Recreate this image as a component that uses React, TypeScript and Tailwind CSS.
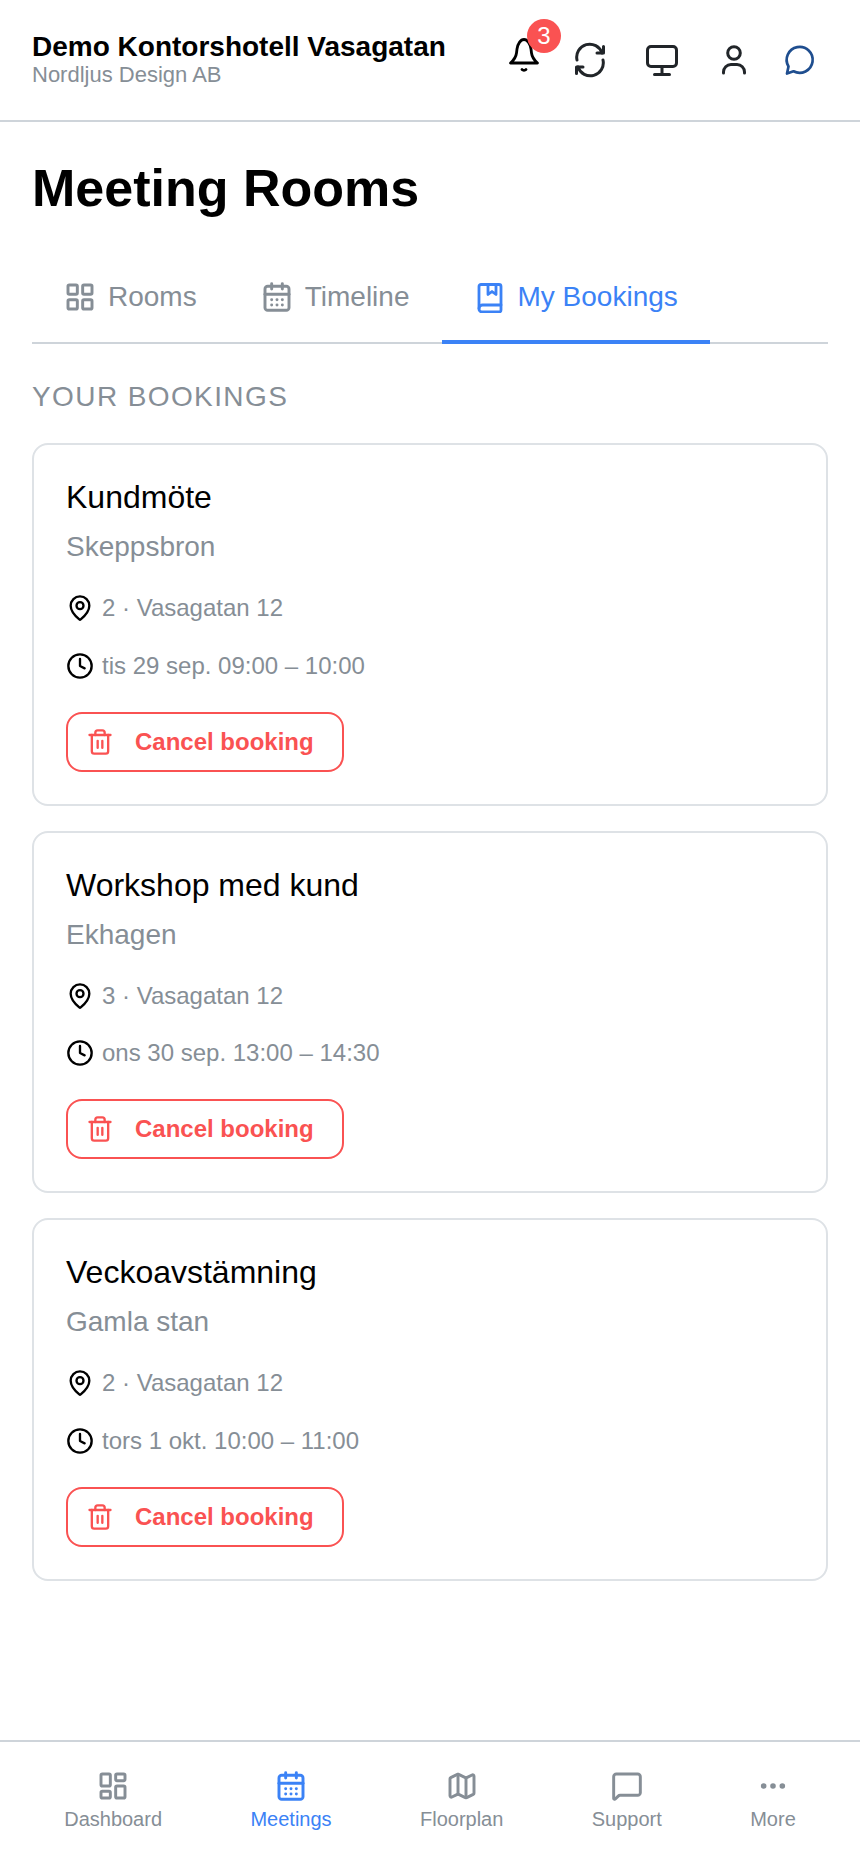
import React from 'react';
import {
  CalendarDays,
  Clock,
  Ellipsis,
  LayoutDashboard,
  LayoutGrid,
  Map,
  MapPin,
  MessageSquare,
  Trash2,
} from 'lucide-react';

const bookings = [
  { title: 'Kundmöte', room: 'Skeppsbron', place: '2 · Vasagatan 12', time: 'tis 29 sep. 09:00 – 10:00' },
  { title: 'Workshop med kund', room: 'Ekhagen', place: '3 · Vasagatan 12', time: 'ons 30 sep. 13:00 – 14:30' },
  { title: 'Veckoavstämning', room: 'Gamla stan', place: '2 · Vasagatan 12', time: 'tors 1 okt. 10:00 – 11:00' },
];

// header icons are not in lucide in this exact shape, so drawn by hand
function HeaderIcon({ children, width = 3, className = '' }: { children: React.ReactNode; width?: number; className?: string }) {
  return (
    <svg
      width="36"
      height="36"
      viewBox="0 0 36 36"
      fill="none"
      stroke="currentColor"
      strokeWidth={width}
      strokeLinecap="round"
      strokeLinejoin="round"
      className={className}
    >
      {children}
    </svg>
  );
}

function BookIcon() {
  return (
    <svg width="32" height="32" viewBox="0 0 32 32" fill="none" stroke="currentColor" strokeWidth="2.8" strokeLinecap="round" strokeLinejoin="round">
      <path d="M7 3.5h18a2 2 0 0 1 2 2v23.5a2 2 0 0 1-2 2H8a3 3 0 0 1-3-3V5.5a2 2 0 0 1 2-2z" />
      <path d="M5 27.5a3.5 3.5 0 0 1 3.5-3.5H27" />
      <path d="M14 3.5v10l4-3 4 3v-10" />
    </svg>
  );
}

function BookingCard({ title, room, place, time }: { title: string; room: string; place: string; time: string }) {
  return (
    <div className="rounded-2xl border-2 border-[#dee2e6] px-8 pt-[32px] pb-[32px]">
      <h3 className="text-[32px] leading-[40px] text-black">{title}</h3>
      <p className="mt-[12px] text-[28px] leading-[36px] text-[#868e96]">{room}</p>
      <div className="mt-[25px] flex h-[36px] items-center gap-[8px] text-[24px] text-[#868e96]">
        <MapPin size={28} strokeWidth={2} className="text-black" />
        <span>{place}</span>
      </div>
      <div className="mt-[21.75px] flex h-[36px] items-center gap-[8px] text-[24px] text-[#868e96]">
        <Clock size={28} strokeWidth={2} className="text-black" />
        <span>{time}</span>
      </div>
      <button className="mt-[28px] flex h-[60px] w-[278px] items-center rounded-2xl border-2 border-[#fa5252] pl-[18px] text-[24px] font-bold text-[#fa5252]">
        <Trash2 size={28} strokeWidth={2} />
        <span className="ml-[21px]">Cancel booking</span>
      </button>
    </div>
  );
}

function NavItem({ icon, label, active }: { icon: React.ReactNode; label: string; active?: boolean }) {
  return (
    <div className={`flex flex-col items-center gap-[3px] ${active ? 'text-[#3b82f6]' : 'text-[#868e96]'}`}>
      {icon}
      <span className="text-[20px] leading-[28px]">{label}</span>
    </div>
  );
}

export default function App() {
  return (
    <div className="flex h-[1864px] flex-col bg-white font-['Liberation_Sans',sans-serif]">
      <header className="flex h-[122px] items-center justify-between border-b-2 border-[#ced4da] pr-[42px] pl-8">
        <div>
          <div className="text-[28px] leading-[30px] font-bold text-black">Demo Kontorshotell Vasagatan</div>
          <div className="text-[22px] leading-[26px] text-[#868e96]">Nordljus Design AB</div>
        </div>
        <div className="flex items-center text-[#212529]">
          <div className="relative -mt-[8px]">
            <svg width="36" height="36" viewBox="0 0 36 36" fill="none" stroke="#000" strokeWidth="2.8" strokeLinecap="round" strokeLinejoin="round">
              <path d="M4.5 25h27c-3.5-3-5.5-6-6-10l-.5-4c-.7-5-3.5-9.5-7-9.5s-6.3 4.5-7 9.5l-.5 4c-.5 4-2.5 7-6 10z" />
              <path d="M16 31.5c1 1 3 1 4 0" />
            </svg>
            <span className="absolute -top-[19px] left-[21px] flex h-[34px] w-[34px] items-center justify-center rounded-full bg-[#fa5252] text-[24px] text-white">
              3
            </span>
          </div>
          <HeaderIcon className="ml-[30px]">
            <path d="M5 18A13 13 0 0 1 30 11" />
            <path d="M31.5 4.5V11H25" />
            <path d="M31 18A13 13 0 0 1 6 25" />
            <path d="M4.5 31.5V25H11" />
          </HeaderIcon>
          <HeaderIcon className="ml-[36px]">
            <rect x="3.5" y="4.5" width="29" height="20" rx="3.5" />
            <path d="M18 25v7" />
            <path d="M10.5 32.5h15" />
          </HeaderIcon>
          <HeaderIcon className="ml-[36px]">
            <circle cx="18" cy="11" r="6.3" />
            <path d="M7.5 31v-1a7.5 7.5 0 0 1 7.5-7.5h6a7.5 7.5 0 0 1 7.5 7.5v1" />
          </HeaderIcon>
          <HeaderIcon width={2.7} className="ml-[30px] text-[#1f4e8f]">
            <path d="M6.5 24.5A13 13 0 1 1 11.5 29.3L5 31.5z" />
          </HeaderIcon>
        </div>
      </header>

      <main className="flex-1 px-8">
        <h1 className="mt-[34px] text-[52px] leading-[64px] font-bold text-black">Meeting Rooms</h1>

        <div className="mt-[32px] flex h-[92px] border-b-2 border-[#ced4da]">
          <div className="flex items-center gap-[12px] px-8 text-[28px] text-[#868e96]">
            <LayoutGrid size={32} strokeWidth={2.2} />
            Rooms
          </div>
          <div className="flex items-center gap-[12px] px-8 text-[28px] text-[#868e96]">
            <CalendarDays size={32} strokeWidth={2.2} />
            Timeline
          </div>
          <div className="-mb-[2px] ml-[1px] flex items-center gap-[11px] border-b-4 border-[#3b82f6] px-8 pt-[2px] text-[28px] text-[#3b82f6]">
            <BookIcon />
            My Bookings
          </div>
        </div>

        <h2 className="mt-[37px] text-[28px] leading-[32px] tracking-[1.4px] text-[#868e96]">YOUR BOOKINGS</h2>

        <div className="mt-[29.75px] flex flex-col gap-[25px]">
          {bookings.map((b) => (
            <BookingCard key={b.title} {...b} />
          ))}
        </div>
      </main>

      <nav className="flex h-[124px] items-start justify-around border-t-2 border-[#ced4da] px-[20px] pt-[28px]">
        <NavItem icon={<LayoutDashboard size={32} strokeWidth={2.2} />} label="Dashboard" />
        <NavItem icon={<CalendarDays size={32} strokeWidth={2.2} />} label="Meetings" active />
        <NavItem icon={<Map size={32} strokeWidth={2.2} />} label="Floorplan" />
        <NavItem icon={<MessageSquare size={32} strokeWidth={2.2} />} label="Support" />
        <NavItem icon={<Ellipsis size={32} strokeWidth={2.2} />} label="More" />
      </nav>
    </div>
  );
}
